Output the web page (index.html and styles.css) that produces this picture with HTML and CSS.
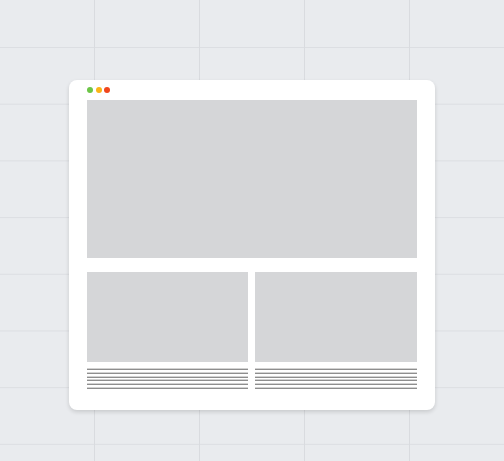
FILE: index.html
```html
<!DOCTYPE html>
<html>
<head>
<meta charset="utf-8">
<link rel="stylesheet" href="styles.css">
</head>
<body>
<div class="stage">
  <div class="window">
    <div class="titlebar">
      <span class="dot green"></span>
      <span class="dot yellow"></span>
      <span class="dot red"></span>
    </div>
    <div class="hero"></div>
    <div class="cols">
      <div class="col">
        <div class="thumb"></div>
        <div class="lines">
          <span></span><span></span><span></span><span></span><span></span><span></span>
        </div>
      </div>
      <div class="col">
        <div class="thumb"></div>
        <div class="lines">
          <span></span><span></span><span></span><span></span><span></span><span></span>
        </div>
      </div>
    </div>
  </div>
</div>
</body>
</html>
```

FILE: styles.css
```css
html, body {
  margin: 0;
  padding: 0;
}
body {
  width: 504px;
  height: 461px;
  overflow: hidden;
  background-color: #e9ebee;
  background-image:
    linear-gradient(to right, #d9dbdf 1px, transparent 1px),
    linear-gradient(to bottom, #dcdee2 1px, transparent 1px);
  background-size: 105px 56.7px;
  background-position: 94px 47px;
}
.stage {
  padding: 80px 0 0 69px;
}
.window {
  width: 330px;
  padding: 0 18px 21px 18px;
  background: #ffffff;
  border-radius: 8px;
  box-shadow: 0 2px 4px rgba(0, 0, 0, 0.14);
}
.titlebar {
  height: 20px;
  display: flex;
  align-items: center;
  gap: 2.5px;
}
.dot {
  width: 6px;
  height: 6px;
  border-radius: 50%;
}
.green { background: #6cc547; }
.yellow { background: #fbb416; }
.red { background: #f0471d; }
.hero {
  height: 158px;
  background: #d5d6d8;
}
.cols {
  margin-top: 14px;
  display: grid;
  grid-template-columns: 161px 162px;
  gap: 7px;
}
.thumb {
  height: 90px;
  background: #d5d6d8;
}
.lines {
  margin-top: 7px;
  display: flex;
  flex-direction: column;
  gap: 2.8px;
}
.lines span {
  display: block;
  height: 1px;
  background: #8e8e8e;
  box-shadow: 0 -1px 0 #d2d2d2;
}
```
